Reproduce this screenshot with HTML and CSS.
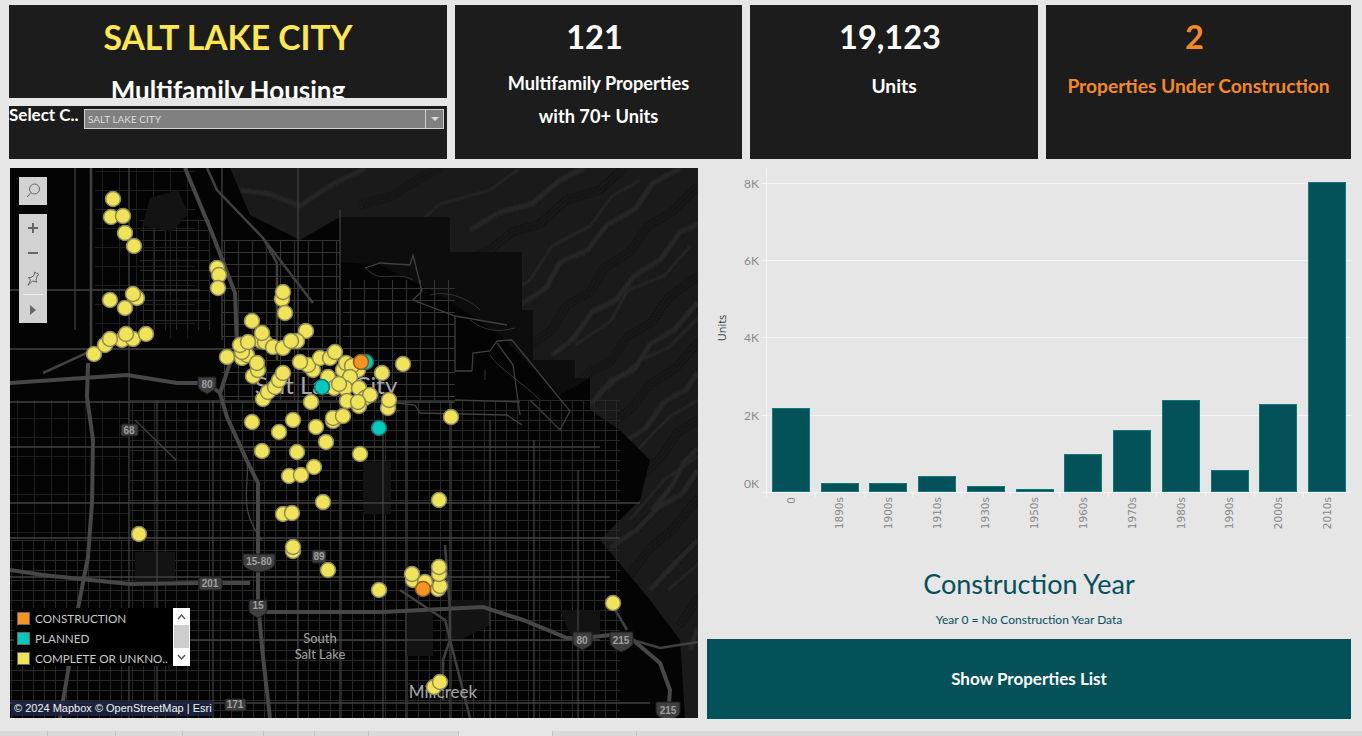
FILE: index.html
```html
<!DOCTYPE html>
<html lang="en">
<head>
    <meta charset="UTF-8">
    <meta name="viewport" content="width=device-width, initial-scale=1.0">
    <title>Salt Lake City Multifamily Housing</title>
    <link rel="stylesheet" href="styles.css">
</head>
<body>
    <div class="top-row">
        <div class="title-col">
            <div class="card title-card">
                <h1>SALT LAKE CITY</h1>
                <h2>Multifamily Housing</h2>
            </div>
            <div class="card select-card">
                <span class="select-label">Select C..</span>
                <div class="select-box">
                    <span class="select-value">SALT LAKE CITY</span>
                    <span class="select-arrow"></span>
                </div>
            </div>
        </div>
        <div class="card kpi kpi-props">
            <div class="kpi-num">121</div>
            <div class="kpi-label kpi-label-two">Multifamily Properties<br>with 70+ Units</div>
        </div>
        <div class="card kpi kpi-units">
            <div class="kpi-num">19,123</div>
            <div class="kpi-label">Units</div>
        </div>
        <div class="card kpi kpi-build">
            <div class="kpi-num">2</div>
            <div class="kpi-label">Properties Under Construction</div>
        </div>
    </div>

    <div class="main-row">
        <div class="map">
            <svg class="map-svg" viewBox="10 168 688 550" width="688" height="550">
                <defs>
                    <pattern id="grid-fine" width="11" height="10" patternUnits="userSpaceOnUse">
                        <path class="street" d="M0.5 0V10M0 0.5H11"/>
                    </pattern>
                    <pattern id="grid-town" width="14" height="12" patternUnits="userSpaceOnUse">
                        <path class="street-b" d="M0.5 0V12M0 0.5H14"/>
                    </pattern>
                    <pattern id="grid-wide" width="17" height="19" patternUnits="userSpaceOnUse">
                        <path class="street-dim" d="M0.5 0V19M0 0.5H17"/>
                    </pattern>
                    <clipPath id="hill-clip">
                        <path d="M230 168H698V718H685L680 640L650 600L625 570L600 540L640 500L650 460L620 430L590 410V378H575V360H533V310H522V252H450V217H340L300 240L250 215Z"/>
                    </clipPath>
                    <filter id="soft">
                        <feGaussianBlur stdDeviation="1.200"/>
                    </filter>
                </defs>

                <rect class="land" x="10" y="168" width="688" height="550"/>

                <!-- hills -->
                <path class="hill" d="M230 168H698V718H685L680 640L650 600L625 570L600 540L640 500L650 460L620 430L590 410V378H575V360H533V310H522V252H450V217H340L300 240L250 215Z"/>
                <path class="hill-dark" d="M340 217H450V252H522V310H533V360H575V378H590L560 395L500 335L440 295L380 265L340 262Z"/>
                <g clip-path="url(#hill-clip)" filter="url(#soft)">
                    <g class="ridge">
                        <path d="M530 345L552 330L566 306L590 292L604 268L630 252L648 226L672 212L698 186"/>
                        <path d="M568 395L590 372L610 362L628 336L652 322L668 298L698 276"/>
                        <path d="M462 262L490 250L512 232L540 224L566 200L600 190L624 168"/>
                        <path d="M610 425L632 408L650 384L676 368L698 342"/>
                        <path d="M640 478L662 456L678 432L698 420"/>
                        <path d="M630 575L650 548L672 530L698 498"/>
                        <path d="M680 625L698 598"/>
                        <path d="M360 205L392 196L420 178L440 168"/>
                    </g>
                    <g class="ridge-light">
                        <path d="M520 305L546 288L560 262L588 250L606 226L636 208L652 184L680 168"/>
                        <path d="M552 355L572 340L592 312L616 300L634 276L660 260L680 232L698 224"/>
                        <path d="M590 405L612 380L634 370L650 344L674 330L698 302"/>
                        <path d="M624 442L646 428L664 402L686 390L698 372"/>
                        <path d="M652 510L672 486L684 462L698 448"/>
                        <path d="M610 548L636 530L660 506L682 494L698 470"/>
                        <path d="M650 590L676 562L698 540"/>
                        <path d="M470 230L500 212L532 204L560 180L584 168"/>
                        <path d="M240 190L270 194L300 206L330 186L365 168"/>
                        <path d="M690 650L698 628"/>
                    </g>
                    <g class="ridge-thin">
                        <path d="M500 300L530 280L552 246L590 226L612 196L640 180"/>
                        <path d="M575 345L610 322L628 290L664 276L690 246"/>
                        <path d="M600 395L640 360L668 348L698 318"/>
                        <path d="M630 458L668 418L698 400"/>
                        <path d="M630 520L664 480L698 456"/>
                        <path d="M668 590L698 564"/>
                        <path d="M400 240L440 204L490 190L520 168"/>
                    </g>
                </g>

                <!-- street grids -->
                <rect fill="url(#grid-fine)" x="130" y="400" width="490" height="318"/>
                <rect fill="url(#grid-fine)" x="10" y="540" width="120" height="178"/>
                <rect fill="url(#grid-town)" x="343" y="280" width="112" height="120"/>
                <rect fill="url(#grid-town)" x="222" y="240" width="118" height="160"/>
                <rect fill="url(#grid-wide)" x="95" y="168" width="100" height="170"/>
                <rect fill="url(#grid-wide)" x="10" y="400" width="120" height="140"/>
                <rect fill="url(#grid-fine)" x="140" y="220" width="70" height="110"/>
                <path class="park" d="M150 198L178 190L188 214L172 232L142 226Z"/>
                <rect class="park" x="363" y="462" width="28" height="52"/>
                <rect class="park" x="405" y="612" width="28" height="44"/>
                <rect class="park" x="135" y="552" width="40" height="30"/>
                <path class="park" d="M450 600H490L490 625L460 640H445Z"/>
                <path class="park" d="M560 610H600V635H570Z"/>

                <!-- arterials -->
                <path class="arterial" d="M10 349H340M10 402H455M10 447H600M10 503H640M10 538H620M10 577H610M10 640H600M10 703H650"/>
                <path class="arterial" d="M129 168V718M213 400V718M298 168V718M340 210V718M383 400V718M406 400V718M450 400V718M490 420V718M534 440V718M578 470V718M157 400V718"/>
                <path class="arterial" d="M10 290H200M75 168V330M222 168V340"/>
                <path class="arterial" d="M240 445C260 470 230 500 262 540M176 460L135 420"/>

                <!-- canyon roads -->
                <path class="arterial" d="M365 268L380 263L410 265L413 255L422 291L413 300L455 316L507 325"/>
                <path class="arterial" d="M512 340L570 411L560 430L530 400M472 371L473 353L490 351L497 341L512 340M455 316V371H472"/>
                <path class="arterial" d="M497 343L513 365L520 415M397 403L415 405L420 413L507 415L522 425M455 400L520 402"/>
                <path class="street-b" d="M366 268C380 285 395 270 413 280M430 295C450 290 470 300 480 310M470 320C490 335 505 330 515 328M485 370V380M490 355C500 370 520 380 540 400"/>

                <!-- highways -->
                <path class="hwy" d="M185 168L212 233L235 293L237 347L230 363L220 393L227 417L248 463L258 483V553V603L263 657L270 718"/>
                <path class="hwy" d="M10 383L83 378L127 375L177 383H207L220 393"/>
                <path class="hwy" d="M88 363L87 397L93 440L92 503L88 557L78 608L70 660L60 718"/>
                <path class="hwy" d="M10 570L43 575L90 580L130 584L200 583H250"/>
                <path class="hwy" d="M263 612H383L483 607L523 620L567 638H583L610 635L633 640L660 663L670 690L668 718"/>
                <path class="hwy-thin" d="M633 640L660 648L698 642M613 606L627 630M43 373L93 350"/>
                <path class="hwy-thin" d="M91 168V347M207 168L217 190L263 238L277 263V360M263 238L313 303"/>
                <path class="hwy-thin" d="M400 590L445 620L470 718"/>
                <path class="hwy-thin" d="M445 545L450 610V640L443 660V700"/>

                <!-- road signs -->
                <g class="shield">
                    <path d="M198 377H216V386C216 390 210 392 207 394C204 392 198 390 198 386Z"/>
                    <rect x="121" y="424" width="17" height="12" rx="2"/>
                    <rect x="199" y="577" width="23" height="13" rx="2"/>
                    <path d="M243 554H275V563C275 568 265 572 259 572C253 572 243 568 243 563Z"/>
                    <path d="M249 600H267V610C267 614 261 616 258 618C255 616 249 614 249 610Z"/>
                    <rect x="312" y="550" width="14" height="13" rx="2"/>
                    <rect x="225" y="699" width="21" height="12" rx="2"/>
                    <path d="M573 632H592V642C592 646 586 648 582 650C579 648 573 646 573 642Z"/>
                    <path d="M610 632H633V642C633 647 626 650 621 652C617 650 610 647 610 642Z"/>
                    <path d="M656 702H680V712C680 716 672 720 668 720C664 720 656 716 656 712Z"/>
                </g>
                <g class="shield-text">
                    <text x="207" y="388">80</text>
                    <text x="129" y="434">68</text>
                    <text x="210" y="587">201</text>
                    <text x="259" y="565">15-80</text>
                    <text x="258" y="609">15</text>
                    <text x="319" y="560">89</text>
                    <text x="235" y="708">171</text>
                    <text x="582" y="644">80</text>
                    <text x="621" y="644">215</text>
                    <text x="668" y="714">215</text>
                </g>

                <!-- place names -->
                <text class="place place-lg" x="326" y="394">Salt Lake City</text>
                <text class="place" x="320" y="643">South</text>
                <text class="place" x="320" y="659">Salt Lake</text>
                <text class="place place-md" x="443" y="698">Millcreek</text>

                <!-- properties -->
                <g class="dots">
                    <circle cx="113" cy="199" r="7.5"/><circle cx="111" cy="217" r="7.5"/><circle cx="123" cy="216" r="7.5"/>
                    <circle cx="125" cy="233" r="7.5"/><circle cx="134" cy="246" r="7.5"/>
                    <circle cx="217" cy="268" r="7.5"/><circle cx="219" cy="275" r="7.5"/><circle cx="218" cy="288" r="7.5"/>
                    <circle cx="282" cy="299" r="7.5"/><circle cx="283" cy="292" r="7.5"/><circle cx="285" cy="313" r="7.5"/>
                    <circle cx="137" cy="298" r="7.5"/><circle cx="133" cy="294" r="7.5"/><circle cx="110" cy="300" r="7.5"/><circle cx="125" cy="308" r="7.5"/>
                    <circle cx="94" cy="354" r="7.5"/><circle cx="105" cy="345" r="7.5"/><circle cx="122" cy="340" r="7.5"/><circle cx="133" cy="339" r="7.5"/>
                    <circle cx="110" cy="339" r="7.5"/><circle cx="126" cy="334" r="7.5"/><circle cx="146" cy="334" r="7.5"/>
                    <circle cx="252" cy="321" r="7.5"/><circle cx="261" cy="341" r="7.5"/><circle cx="265" cy="342" r="7.5"/><circle cx="262" cy="333" r="7.5"/><circle cx="306" cy="331" r="7.5"/>
                    <circle cx="227" cy="357" r="7.5"/><circle cx="242" cy="358" r="7.5"/><circle cx="247" cy="355" r="7.5"/><circle cx="242" cy="352" r="7.5"/>
                    <circle cx="240" cy="345" r="7.5"/><circle cx="248" cy="342" r="7.5"/>
                    <circle cx="273" cy="347" r="7.5"/><circle cx="283" cy="348" r="7.5"/><circle cx="297" cy="341" r="7.5"/><circle cx="291" cy="341" r="7.5"/>
                    <circle cx="253" cy="376" r="7.5"/><circle cx="258" cy="370" r="7.5"/><circle cx="257" cy="363" r="7.5"/>
                    <circle cx="313" cy="370" r="7.5"/><circle cx="308" cy="365" r="7.5"/><circle cx="300" cy="362" r="7.5"/>
                    <circle cx="320" cy="358" r="7.5"/><circle cx="330" cy="358" r="7.5"/><circle cx="335" cy="352" r="7.5"/>
                    <circle cx="343" cy="370" r="7.5"/><circle cx="346" cy="363" r="7.5"/><circle cx="358" cy="370" r="7.5"/><circle cx="352" cy="366" r="7.5"/>
                    <circle cx="382" cy="373" r="7.5"/><circle cx="403" cy="364" r="7.5"/>
                    <circle cx="263" cy="399" r="7.5"/><circle cx="268" cy="392" r="7.5"/><circle cx="275" cy="387" r="7.5"/><circle cx="279" cy="380" r="7.5"/><circle cx="283" cy="373" r="7.5"/>
                    <circle cx="328" cy="377" r="7.5"/><circle cx="350" cy="377" r="7.5"/><circle cx="334" cy="388" r="7.5"/><circle cx="345" cy="388" r="7.5"/><circle cx="339" cy="384" r="7.5"/>
                    <circle cx="359" cy="388" r="7.5"/><circle cx="365" cy="398" r="7.5"/><circle cx="370" cy="395" r="7.5"/>
                    <circle cx="311" cy="402" r="7.5"/><circle cx="347" cy="401" r="7.5"/><circle cx="359" cy="406" r="7.5"/><circle cx="358" cy="402" r="7.5"/>
                    <circle cx="388" cy="408" r="7.5"/><circle cx="389" cy="400" r="7.5"/>
                    <circle cx="333" cy="421" r="7.5"/><circle cx="333" cy="418" r="7.5"/><circle cx="343" cy="416" r="7.5"/>
                    <circle cx="451" cy="417" r="7.5"/>
                    <circle cx="252" cy="422" r="7.5"/><circle cx="293" cy="420" r="7.5"/><circle cx="316" cy="427" r="7.5"/><circle cx="279" cy="432" r="7.5"/><circle cx="326" cy="442" r="7.5"/>
                    <circle cx="262" cy="451" r="7.5"/><circle cx="297" cy="452" r="7.5"/><circle cx="360" cy="454" r="7.5"/>
                    <circle cx="314" cy="467" r="7.5"/><circle cx="289" cy="476" r="7.5"/><circle cx="301" cy="475" r="7.5"/>
                    <circle cx="323" cy="502" r="7.5"/><circle cx="439" cy="500" r="7.5"/>
                    <circle cx="283" cy="514" r="7.5"/><circle cx="292" cy="513" r="7.5"/>
                    <circle cx="293" cy="551" r="7.5"/><circle cx="293" cy="547" r="7.5"/><circle cx="328" cy="570" r="7.5"/>
                    <circle cx="139" cy="534" r="7.5"/><circle cx="379" cy="590" r="7.5"/><circle cx="613" cy="603" r="7.5"/>
                    <circle cx="413" cy="580" r="7.5"/><circle cx="412" cy="574" r="7.5"/><circle cx="425" cy="582" r="7.5"/>
                    <circle cx="438" cy="589" r="7.5"/><circle cx="440" cy="586" r="7.5"/><circle cx="439" cy="574" r="7.5"/><circle cx="439" cy="567" r="7.5"/>
                    <circle cx="434" cy="687" r="7.5"/><circle cx="440" cy="682" r="7.5"/>
                </g>
                <g class="dots-teal">
                    <circle cx="366" cy="362" r="7.5"/><circle cx="322" cy="387" r="7.5"/><circle cx="379" cy="428" r="7.5"/>
                </g>
                <g class="dots-orange">
                    <circle cx="361" cy="362" r="7.5"/><circle cx="423" cy="589" r="7.5"/>
                </g>
            </svg>

            <div class="map-btn search-btn">
                <svg viewBox="0 0 28 28" width="28" height="28">
                    <circle class="icon-line" cx="15.500" cy="12" r="5"/>
                    <path class="icon-line" d="M12 15.500L8 20"/>
                </svg>
            </div>
            <div class="map-tools">
                <svg viewBox="0 0 28 109" width="28" height="109">
                    <path class="icon-thick" d="M14 9V19M9 14H19M9 39H19"/>
                    <path class="icon-line" d="M15.500 58L20 60.500L18 62L17 66.500L18 68L13.500 67L9 71.500L11.500 66L9.500 63.500L12 63.500L15 61.500Z"/>
                    <path class="tool-sep" d="M4 80.500H24"/>
                    <path class="icon-fill" d="M11 91L17 96L11 101Z"/>
                </svg>
            </div>

            <div class="legend">
                <div class="legend-list">
                    <div class="legend-item"><span class="swatch swatch-orange"></span>CONSTRUCTION</div>
                    <div class="legend-item"><span class="swatch swatch-teal"></span>PLANNED</div>
                    <div class="legend-item"><span class="swatch swatch-yellow"></span>COMPLETE OR UNKNO..</div>
                </div>
                <div class="legend-scroll">
                    <svg viewBox="0 0 17 58" width="17" height="58">
                        <rect class="scroll-thumb" x="1" y="17" width="15" height="23"/>
                        <path class="scroll-arrow" d="M5 11L8.500 7L12 11M5 47L8.500 51L12 47"/>
                    </svg>
                </div>
            </div>

            <div class="attribution">© 2024 Mapbox © OpenStreetMap | Esri</div>
        </div>

        <div class="side">
            <svg class="chart" viewBox="707 168 644 372" width="644" height="372">
                <path class="grid-line" d="M762 183.500H1351M762 260.500H1351M762 337.500H1351M762 415.500H1351M762 492.500H1351M766.500 168V498"/>
                <path class="tick" d="M815.500 492V497M864.500 492V497M912.500 492V497M961.500 492V497M1010.500 492V497M1059.500 492V497M1108.500 492V497M1156.500 492V497M1205.500 492V497M1254.500 492V497M1303.500 492V497"/>
                <g class="y-labels">
                    <text x="759" y="188">8K</text>
                    <text x="759" y="265">6K</text>
                    <text x="759" y="342">4K</text>
                    <text x="759" y="420">2K</text>
                    <text x="759" y="488">0K</text>
                </g>
                <text class="y-title" transform="translate(726 328) rotate(-90)">Units</text>
                <g class="bars">
                    <rect x="772.500" y="408.500" width="37" height="83"/>
                    <rect x="821.500" y="483.500" width="37" height="8"/>
                    <rect x="869.500" y="483.500" width="37" height="8"/>
                    <rect x="918.500" y="476.500" width="37" height="15"/>
                    <rect x="967.500" y="486.500" width="37" height="5"/>
                    <rect x="1016.500" y="489.500" width="37" height="2"/>
                    <rect x="1064.500" y="454.500" width="37" height="37"/>
                    <rect x="1113.500" y="430.500" width="37" height="61"/>
                    <rect x="1162.500" y="400.500" width="37" height="91"/>
                    <rect x="1211.500" y="470.500" width="37" height="21"/>
                    <rect x="1259.500" y="404.500" width="37" height="87"/>
                    <rect x="1308.500" y="182.500" width="37" height="309"/>
                </g>
                <g class="x-labels">
                    <text transform="translate(795 497) rotate(-90)">0</text>
                    <text transform="translate(843 497) rotate(-90)">1890s</text>
                    <text transform="translate(892 497) rotate(-90)">1900s</text>
                    <text transform="translate(941 497) rotate(-90)">1910s</text>
                    <text transform="translate(989 497) rotate(-90)">1930s</text>
                    <text transform="translate(1038 497) rotate(-90)">1950s</text>
                    <text transform="translate(1087 497) rotate(-90)">1960s</text>
                    <text transform="translate(1136 497) rotate(-90)">1970s</text>
                    <text transform="translate(1185 497) rotate(-90)">1980s</text>
                    <text transform="translate(1233 497) rotate(-90)">1990s</text>
                    <text transform="translate(1282 497) rotate(-90)">2000s</text>
                    <text transform="translate(1331 497) rotate(-90)">2010s</text>
                </g>
            </svg>
            <div class="chart-title">Construction Year</div>
            <div class="chart-note">Year 0 = No Construction Year Data</div>
            <div class="list-btn">Show Properties List</div>
        </div>
    </div>

    <div class="tabs">
        <span class="tab tab-1"></span>
        <span class="tab tab-2"></span>
        <span class="tab tab-3"></span>
        <span class="tab tab-4"></span>
        <span class="tab tab-5"></span>
        <span class="tab tab-6"></span>
        <span class="tab tab-7"></span>
        <span class="tab tab-active"></span>
        <span class="tab tab-9"></span>
        <span class="tab tab-10"></span>
    </div>
</body>
</html>
```

FILE: styles.css
```css
* {
    box-sizing: border-box;
}
body {
    font-family: Lato, "Open Sans", sans-serif;
    background-color: #e6e6e6;
    margin: 0;
    width: 1362px;
    height: 736px;
    overflow: hidden;
    display: flex;
    flex-direction: column;
}
.top-row {
    display: flex;
    gap: 8px;
    margin: 5px 0 0 9px;
    height: 154px;
}
.card {
    background: #1c1c1c;
}
.title-col {
    width: 438px;
    display: flex;
    flex-direction: column;
    gap: 8px;
}
.title-card {
    height: 93px;
    overflow: hidden;
    text-align: center;
}
h1 {
    margin: 12px 0 0;
    font-size: 33.700px;
    line-height: 40px;
    font-weight: 700;
    color: #ffe84f;
}
h2 {
    margin: 17px 0 0;
    font-size: 26px;
    line-height: 32px;
    font-weight: 700;
    color: #fff;
}
.select-card {
    flex: 1;
    display: flex;
    align-items: flex-start;
    padding: 3px 3px 0 0;
}
.select-label {
    width: 75px;
    font-size: 17px;
    line-height: 12px;
    font-weight: 700;
    color: #fff;
    white-space: nowrap;
}
.select-box {
    flex: 1;
    height: 20px;
    display: flex;
    align-items: center;
    justify-content: space-between;
    background: #808080;
    border: 1px solid #cfcfcf;
}
.select-value {
    padding-left: 3px;
    font-size: 10px;
    color: #dedede;
}
.select-arrow {
    width: 18px;
    height: 18px;
    border-left: 1px solid #cfcfcf;
    position: relative;
}
.select-arrow::after {
    content: "";
    position: absolute;
    left: 5px;
    top: 7px;
    border-left: 4px solid transparent;
    border-right: 4px solid transparent;
    border-top: 4px solid #ddd;
}
.kpi {
    text-align: center;
    color: #fff;
    padding-top: 12px;
}
.kpi-props {
    width: 287px;
}
.kpi-units {
    width: 288px;
}
.kpi-build {
    width: 305px;
    color: #f58a23;
}
.kpi-num {
    padding-right: 8px;
    font-size: 32.500px;
    line-height: 40px;
    font-weight: 700;
}
.kpi-label {
    margin-top: 12px;
    font-size: 19.200px;
    line-height: 33px;
    font-weight: 700;
    white-space: nowrap;
}
.kpi-label-two {
    margin-top: 10px;
    font-size: 18.200px;
}

.main-row {
    display: flex;
    gap: 9px;
    margin: 9px 0 0 10px;
    height: 551px;
}
.map {
    position: relative;
    width: 688px;
    height: 550px;
    overflow: hidden;
    background: #040404;
}
.map-svg {
    display: block;
}
.land {
    fill: #040404;
}
.hill {
    fill: #1a1a1a;
}
.hill-dark {
    fill: #0d0d0d;
}
.ridge path {
    fill: none;
    stroke: #131313;
    stroke-width: 6;
    stroke-linejoin: round;
}
.ridge-light path {
    fill: none;
    stroke: #262626;
    stroke-width: 5;
    stroke-linejoin: round;
}
.ridge-thin path {
    fill: none;
    stroke: #2a2a2a;
    stroke-width: 2;
    stroke-linejoin: round;
}
.street {
    fill: none;
    stroke: #272727;
    stroke-width: 1;
}
.street-dim {
    fill: none;
    stroke: #1d1d1d;
    stroke-width: 1;
}
.street-b {
    fill: none;
    stroke: #343434;
    stroke-width: 1;
}
.park {
    fill: #131313;
}
.arterial {
    fill: none;
    stroke: #404040;
    stroke-width: 1.300;
}
.hwy {
    fill: none;
    stroke: #474747;
    stroke-width: 4;
}
.hwy-thin {
    fill: none;
    stroke: #404040;
    stroke-width: 2.500;
}
.shield {
    fill: #3f3f3f;
    stroke: #1c1c1c;
}
.shield-text text {
    fill: #a0a0a0;
    font-family: "Liberation Sans", sans-serif;
    font-size: 10px;
    font-weight: 700;
    text-anchor: middle;
}
.place {
    fill: #a6a6a6;
    font-size: 13px;
    text-anchor: middle;
}
.place-lg {
    font-size: 24px;
}
.place-md {
    font-size: 17px;
}
.dots circle {
    fill: #efe35a;
    stroke: #8f8a55;
    stroke-width: 1.500;
}
.dots-teal circle {
    fill: #00c9bd;
    stroke: #1c6f6b;
    stroke-width: 1.500;
}
.dots-orange circle {
    fill: #f7931e;
    stroke: #8a5a20;
    stroke-width: 1.500;
}

.map-btn {
    position: absolute;
    left: 9px;
    top: 9px;
    width: 28px;
    height: 28px;
    background: #d2d2d2;
}
.map-btn svg,
.map-tools svg {
    display: block;
}
.map-tools {
    position: absolute;
    left: 9px;
    top: 46px;
    width: 28px;
    height: 109px;
    background: #d2d2d2;
}
.icon-line {
    fill: none;
    stroke: #666;
    stroke-width: 1;
}
.icon-thick {
    fill: none;
    stroke: #666;
    stroke-width: 2;
}
.icon-fill {
    fill: #666;
}
.tool-sep {
    stroke: #eee;
    stroke-width: 1;
}

.legend {
    position: absolute;
    left: 4px;
    top: 440px;
    width: 176px;
    height: 58px;
    display: flex;
    background: #000;
}
.legend-list {
    flex: 1;
}
.legend-item {
    display: flex;
    align-items: center;
    gap: 5px;
    height: 20px;
    padding-left: 3px;
    font-size: 11.700px;
    color: #c9c9c9;
    white-space: nowrap;
}
.swatch {
    width: 13px;
    height: 13px;
    border: 1px solid #666;
}
.swatch-orange {
    background: #f7931e;
}
.swatch-teal {
    background: #00c9bd;
}
.swatch-yellow {
    background: #efe35a;
}
.legend-scroll {
    width: 17px;
    background: #fff;
}
.legend-scroll svg {
    display: block;
}
.scroll-thumb {
    fill: #cdcdcd;
}
.scroll-arrow {
    fill: none;
    stroke: #555;
    stroke-width: 1.400;
}
.attribution {
    position: absolute;
    left: 2px;
    top: 533px;
    height: 15px;
    padding: 0 2px;
    font-family: "Liberation Sans", Arial, sans-serif;
    font-size: 11px;
    line-height: 15px;
    color: #f2f2f2;
    background: rgba(32, 38, 68, 0.85);
    white-space: nowrap;
}

.side {
    width: 644px;
    display: flex;
    flex-direction: column;
    color: #04505a;
    text-align: center;
}
.chart {
    display: block;
}
.grid-line {
    fill: none;
    stroke: #f4f4f4;
    stroke-width: 1;
}
.tick {
    fill: none;
    stroke: #f4f4f4;
    stroke-width: 1;
}
.y-labels text {
    fill: #8a8a8a;
    font-size: 12px;
    text-anchor: end;
}
.y-title {
    fill: #36424e;
    font-family: "Open Sans", sans-serif;
    font-size: 11px;
    text-anchor: middle;
}
.bars rect {
    fill: #03525a;
    stroke: #0d7a78;
    stroke-width: 1;
}
.x-labels text {
    fill: #888;
    font-family: "DejaVu Sans", sans-serif;
    font-size: 10.500px;
    text-anchor: end;
}
.chart-title {
    margin-top: 26px;
    font-size: 27px;
    line-height: 36px;
}
.chart-note {
    margin-top: 10px;
    font-size: 12px;
    line-height: 16px;
}
.list-btn {
    margin-top: auto;
    height: 80px;
    line-height: 80px;
    background: #03525a;
    color: #fff;
    font-size: 17px;
    font-weight: 700;
}

.tabs {
    position: absolute;
    left: 0;
    right: 0;
    top: 731px;
    height: 5px;
    display: flex;
    background: #d9d9d9;
}
.tab {
    height: 5px;
    border-right: 1px solid #c4c4c4;
}
.tab-1 { width: 48px; }
.tab-2 { width: 68px; }
.tab-3 { width: 67px; }
.tab-4 { width: 81px; }
.tab-5 { width: 51px; }
.tab-6 { width: 54px; }
.tab-7 { width: 90px; }
.tab-active { width: 94px; background: #e6e6e6; }
.tab-9 { width: 84px; }
.tab-10 { flex: 1; border-right: none; }
```
